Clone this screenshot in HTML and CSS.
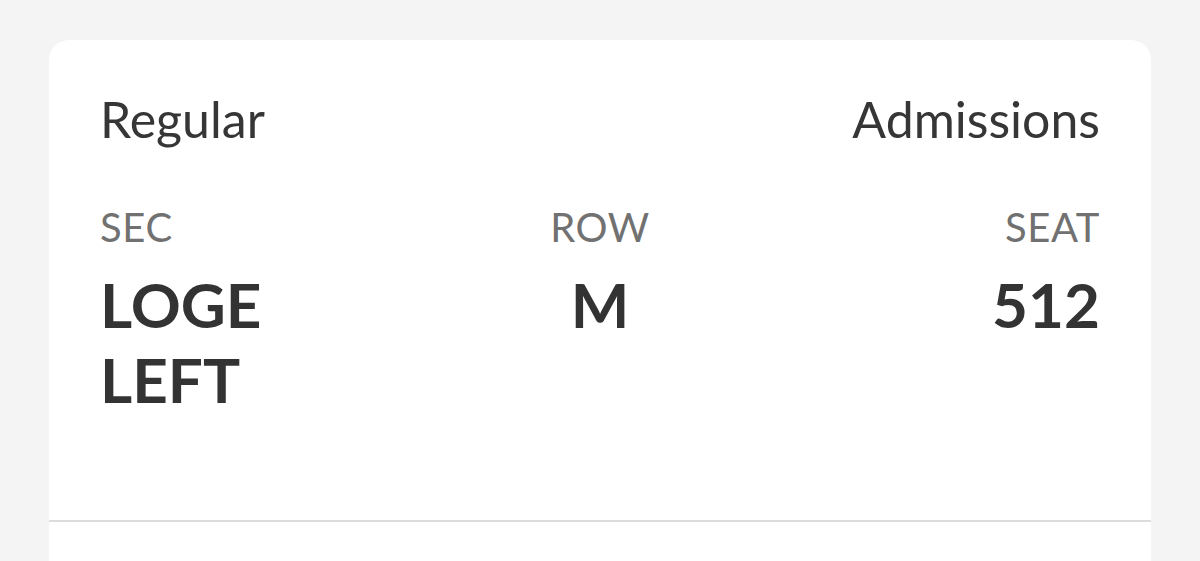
FILE: index.html
```html
<!DOCTYPE html>
<html lang="en">
<head>
<meta charset="utf-8">
<title>Ticket</title>
<link rel="stylesheet" href="styles.css">
</head>
<body>
<div class="card">
  <div class="info">
    <div class="head">
      <span class="type">Regular</span>
      <span class="type">Admissions</span>
    </div>
    <div class="seats">
      <div class="col col-left">
        <div class="label">SEC</div>
        <div class="value sec-value">LOGE LEFT</div>
      </div>
      <div class="col col-center">
        <div class="label">ROW</div>
        <div class="value">M</div>
      </div>
      <div class="col col-right">
        <div class="label">SEAT</div>
        <div class="value">512</div>
      </div>
    </div>
  </div>
  <div class="divider"></div>
  <div class="lower"></div>
</div>
</body>
</html>
```
FILE: styles.css
```css
html, body {
  margin: 0;
  padding: 0;
}
body {
  background: #f4f4f4;
  font-family: Lato, "Open Sans", sans-serif;
  color: #363636;
  height: 561px;
  overflow: hidden;
}
.card {
  margin: 40px 0 0 49px;
  width: 1102px;
  height: 521px;
  background: #ffffff;
  border-radius: 20px 20px 0 0;
  overflow: hidden;
}
.info {
  padding: 49px 51px 0 51px;
  height: 431px;
  box-sizing: border-box;
  height: 480px;
}
.head {
  display: flex;
  justify-content: space-between;
}
.type {
  font-size: 50px;
  line-height: 60px;
  font-weight: 400;
  color: #363636;
}
.seats {
  display: grid;
  grid-template-columns: 1fr 1fr 1fr;
  margin-top: 53px;
}
.col-left { text-align: left; }
.col-center { text-align: center; }
.col-right { text-align: right; }
.label {
  font-size: 40px;
  line-height: 50px;
  letter-spacing: 0.6px;
  color: #717171;
}
.value {
  font-size: 62px;
  line-height: 75px;
  font-weight: 700;
  color: #333333;
  margin-top: 15px;
}
.sec-value {
  max-width: 220px;
}
.divider {
  height: 2px;
  background: #dcdcdc;
}
```
